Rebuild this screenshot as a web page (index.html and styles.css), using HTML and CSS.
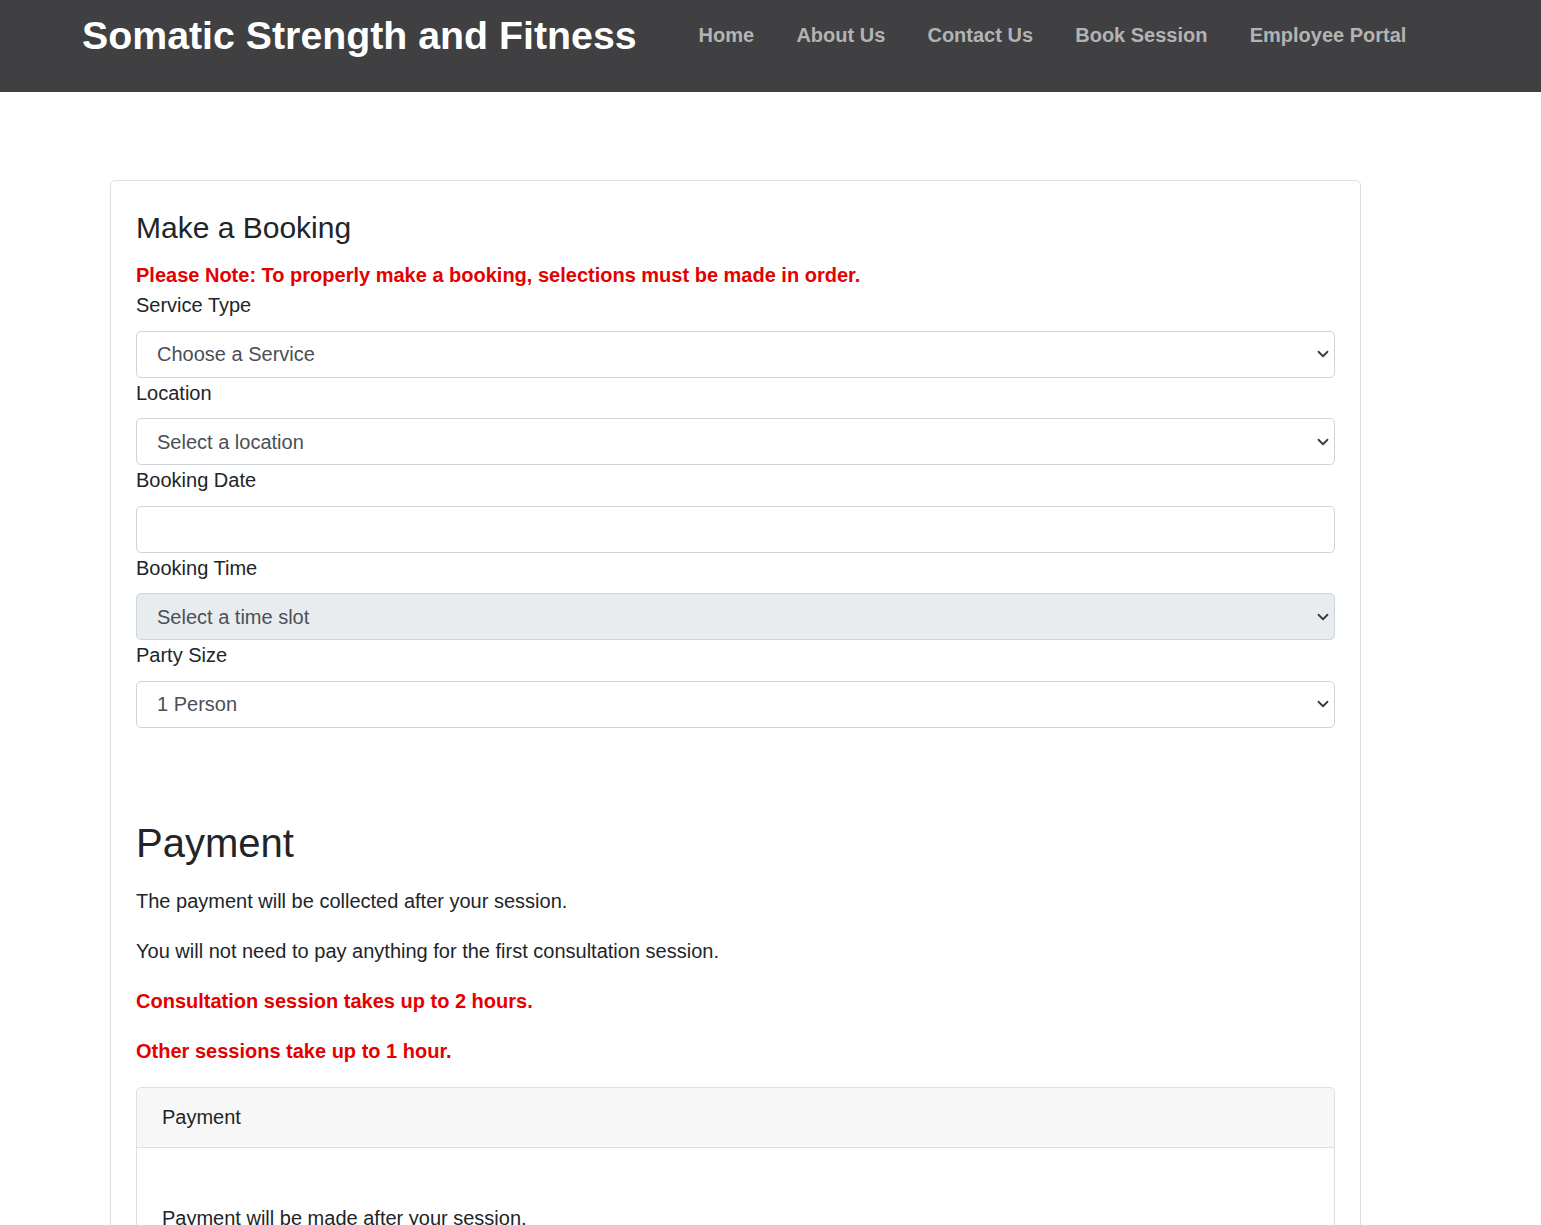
FILE: index.html
```html
<!DOCTYPE html>
<html lang="en">
<head>
<meta charset="utf-8">
<title>Make a Booking - Somatic Strength and Fitness</title>
<link rel="stylesheet" href="styles.css">
</head>
<body>
<header class="site-header">
  <h1 class="brand">Somatic Strength and Fitness</h1>
  <nav class="nav">
    <a class="nav-link" href="#">Home</a>
    <a class="nav-link" href="#">About Us</a>
    <a class="nav-link" href="#">Contact Us</a>
    <a class="nav-link" href="#">Book Session</a>
    <a class="nav-link" href="#">Employee Portal</a>
  </nav>
</header>
<main class="main">
  <section class="card">
    <h2 class="card-title">Make a Booking</h2>
    <p class="note">Please Note: To properly make a booking, selections must be made in order.</p>
    <form class="form">
      <label class="label">Service Type</label>
      <select class="field">
        <option>Choose a Service</option>
      </select>
      <label class="label">Location</label>
      <select class="field">
        <option>Select a location</option>
      </select>
      <label class="label">Booking Date</label>
      <input class="field" type="text">
      <label class="label">Booking Time</label>
      <select class="field field-disabled" disabled>
        <option>Select a time slot</option>
      </select>
      <label class="label">Party Size</label>
      <select class="field">
        <option>1 Person</option>
      </select>
    </form>
    <h2 class="pay-title">Payment</h2>
    <p class="text">The payment will be collected after your session.</p>
    <p class="text">You will not need to pay anything for the first consultation session.</p>
    <p class="text red">Consultation session takes up to 2 hours.</p>
    <p class="text red last">Other sessions take up to 1 hour.</p>
    <div class="inner-card">
      <div class="inner-header">Payment</div>
      <div class="inner-body">
        <p class="inner-text">Payment will be made after your session.</p>
      </div>
    </div>
  </section>
</main>
</body>
</html>
```
FILE: styles.css
```css
* { box-sizing: border-box; }
html, body { margin: 0; padding: 0; }
body {
  font-family: "Liberation Sans", Arial, sans-serif;
  color: #212529;
  background: #fff;
  font-size: 20px;
  line-height: 1.5;
}
.site-header {
  height: 92px;
  background: #404042;
  display: flex;
  align-items: flex-start;
  padding: 12px 0 0 82px;
}
.brand {
  margin: 0;
  font-size: 39.3px;
  line-height: 46px;
  font-weight: 700;
  color: #fff;
  white-space: nowrap;
}
.nav {
  display: flex;
  gap: 42.2px;
  margin-left: 62px;
  height: 46px;
  align-items: center;
}
.nav-link {
  color: #b3b3b3;
  text-decoration: none;
  font-weight: 700;
  font-size: 20px;
  line-height: 24px;
}
.main {
  padding: 88px 0 0 110px;
}
.card {
  width: 1251px;
  border: 1px solid #dfdfdf;
  border-radius: 5px;
  padding: 29px 25px 40px 25px;
  min-height: 1100px;
}
.card-title {
  margin: 0 0 14px;
  font-size: 30px;
  line-height: 36px;
  font-weight: 400;
}
.note {
  margin: 0;
  color: #e50000;
  font-weight: 700;
  font-size: 20px;
  line-height: 30px;
}
.form {
  display: flex;
  flex-direction: column;
}
.label {
  display: block;
  line-height: 30px;
  margin-bottom: 10.5px;
}
.field {
  display: block;
  width: 100%;
  height: 47px;
  border: 1px solid #ced4da;
  border-radius: 5px;
  background: #fff;
  padding: 0 40px 0 20px;
  font-family: inherit;
  font-size: 20px;
  color: #495057;
  appearance: none;
  -webkit-appearance: none;
  outline: none;
}
select.field {
  background-image: url("data:image/svg+xml,%3csvg xmlns='http://www.w3.org/2000/svg' viewBox='0 0 16 16'%3e%3cpath fill='none' stroke='%23343a40' stroke-linecap='round' stroke-linejoin='round' stroke-width='2.4' d='M2 5l6 6 6-6'/%3e%3c/svg%3e");
  background-repeat: no-repeat;
  background-position: right 4px center;
  background-size: 14px 12px;
}
select.field-disabled {
  background-color: #e9ecef;
  opacity: 1;
}
.pay-title {
  margin: 91px 0 19px;
  font-size: 40px;
  line-height: 48px;
  font-weight: 400;
}
.text {
  margin: 0 0 20px;
  line-height: 30px;
}
.text.last {
  margin-bottom: 21px;
}
.red {
  color: #e50000;
  font-weight: 700;
}
.inner-card {
  border: 1px solid #dfdfdf;
  border-radius: 5px;
}
.inner-header {
  background: #f7f7f7;
  border-bottom: 1px solid #dfdfdf;
  padding: 14px 25px 15px;
  line-height: 30px;
  border-radius: 5px 5px 0 0;
}
.inner-body {
  padding: 55px 25px 30px;
}
.inner-text {
  margin: 0 0 20px;
  line-height: 30px;
}
```
